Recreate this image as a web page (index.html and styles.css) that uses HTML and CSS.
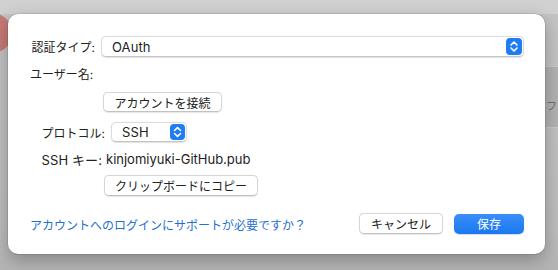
FILE: index.html
```html
<!DOCTYPE html>
<html>
<head>
  <title>アカウント設定</title>
  <link rel="stylesheet" href="styles.css">
</head>
<body>
  <!-- background window, mostly hidden by the sheet -->
  <div class="backdrop">
    <div class="red-dot"></div>
    <div class="side-band"><span>フォ</span></div>
  </div>

  <div class="sheet">
    <div class="row row-auth">
      <label class="label">認証タイプ:</label>
      <div class="popup popup-wide">
        <span class="popup-text">OAuth</span>
        <span class="stepper">
          <svg width="16" height="17" viewBox="0 0 16 17">
            <rect width="16" height="17" rx="4" fill="#1f7df2"/>
            <path d="M5 7 L8 4 L11 7" fill="none" stroke="#fff" stroke-width="1.6" stroke-linecap="round" stroke-linejoin="round"/>
            <path d="M5 10 L8 13 L11 10" fill="none" stroke="#fff" stroke-width="1.6" stroke-linecap="round" stroke-linejoin="round"/>
          </svg>
        </span>
      </div>
    </div>

    <div class="row row-user">
      <label class="label">ユーザー名:</label>
      <span class="value hidden-name">&nbsp;</span>
    </div>

    <div class="row row-connect">
      <span class="label"></span>
      <button class="btn btn-connect">アカウントを接続</button>
    </div>

    <div class="row row-proto">
      <label class="label">プロトコル:</label>
      <div class="popup popup-small">
        <span class="popup-text">SSH</span>
        <span class="stepper">
          <svg width="15" height="16" viewBox="0 0 15 16">
            <rect width="15" height="16" rx="4" fill="#1f7df2"/>
            <path d="M4.5 6.5 L7.5 3.6 L10.5 6.5" fill="none" stroke="#fff" stroke-width="1.6" stroke-linecap="round" stroke-linejoin="round"/>
            <path d="M4.5 9.5 L7.5 12.4 L10.5 9.5" fill="none" stroke="#fff" stroke-width="1.6" stroke-linecap="round" stroke-linejoin="round"/>
          </svg>
        </span>
      </div>
    </div>

    <div class="row row-key">
      <label class="label">SSH キー:</label>
      <span class="value">kinjomiyuki-GitHub.pub</span>
    </div>

    <div class="row row-copy">
      <span class="label"></span>
      <button class="btn btn-copy">クリップボードにコピー</button>
    </div>

    <div class="footer">
      <a class="help-link" href="#">アカウントへのログインにサポートが必要ですか？</a>
      <button class="btn btn-cancel">キャンセル</button>
      <button class="btn btn-save">保存</button>
    </div>
  </div>
</body>
</html>
```

FILE: styles.css
```css
body {
    margin: 0;
    width: 558px;
    height: 270px;
    overflow: hidden;
    font-family: Inter, "Noto Sans CJK JP", sans-serif;
    color: #222;
    background: linear-gradient(#d2d1d2 0px, #d2d1d2 14px, #c4c4c4 14px, #bdbdbd 230px, #b4b4b4 270px);
    position: relative;
}

.backdrop {
    position: absolute;
    inset: 0;
}

.red-dot {
    position: absolute;
    left: -22px;
    top: 14px;
    width: 34px;
    height: 38px;
    border-radius: 50%;
    background-color: #c77a76;
}

.side-band {
    position: absolute;
    left: 545px;
    top: 66px;
    width: 13px;
    height: 60px;
    overflow: hidden;
    background-color: #b2b2b2;
    border-top: 1px solid #c9c9c9;
    border-bottom: 1px solid #c9c9c9;
}

.side-band span {
    display: block;
    margin-top: 30px;
    margin-left: 1px;
    font-size: 11px;
    color: #6e6e6e;
    white-space: nowrap;
}

.sheet {
    position: relative;
    margin: 14px 0 0 8px;
    width: 537px;
    height: 240px;
    box-sizing: border-box;
    padding: 22px 21px 0 22px;
    background-color: #fff;
    border-radius: 10px;
    box-shadow: 0 0 0 0.5px rgba(0, 0, 0, 0.18), 0 6px 18px rgba(0, 0, 0, 0.28);
}

.row {
    display: flex;
    align-items: center;
}

.label {
    width: 65px;
    flex-shrink: 0;
    margin-right: 6px;
    text-align: right;
    font-size: 12px;
    white-space: nowrap;
}

.value {
    font-size: 13px;
}

.row-auth {
    height: 21px;
}

.row-user {
    height: 18px;
    margin-top: 7px;
}

.row-user .label {
    width: 63px;
    margin-right: 8px;
}

.row-connect {
    margin-top: 10px;
}

.row-connect .btn {
    margin-left: 2px;
}

.row-proto {
    margin-top: 10px;
    padding-left: 10px;
}

.row-key {
    height: 18px;
    margin-top: 8px;
    padding-left: 7px;
}

.row-key .label {
    margin-right: 4px;
    font-size: 13px;
}

.row-key .label,
.popup-text {
    letter-spacing: 0.1px;
}

.row-copy {
    margin-top: 7px;
}

.row-copy .btn {
    margin-left: 3px;
}

.popup {
    display: flex;
    align-items: center;
    box-sizing: border-box;
    height: 21px;
    padding: 0 1px 0 10px;
    background-color: #fff;
    border: 1px solid #dcdcdc;
    border-bottom-color: #c4c4c4;
    border-radius: 5px;
    box-shadow: 0 0.5px 1px rgba(0, 0, 0, 0.12);
}

.popup-wide {
    width: 423px;
}

.popup-small {
    width: 76px;
    height: 20px;
}

.popup-text {
    flex: 1;
    font-size: 13px;
}

.stepper {
    display: flex;
}

.btn {
    box-sizing: border-box;
    height: 20px;
    padding: 0;
    font-family: Inter, "Noto Sans CJK JP", sans-serif;
    font-size: 12px;
    color: #222;
    background-color: #fff;
    border: 1px solid #d6d6d6;
    border-bottom-color: #c2c2c2;
    border-radius: 5px;
    box-shadow: 0 0.5px 1px rgba(0, 0, 0, 0.1);
    cursor: pointer;
}

.btn-connect {
    width: 119px;
}

.btn-copy {
    width: 154px;
    height: 21px;
}

.footer {
    display: flex;
    align-items: center;
    margin-top: 17px;
}

.help-link {
    flex: 1;
    margin-top: 1px;
    font-size: 12px;
    color: #1f6fcf;
    text-decoration: none;
}

.btn-cancel {
    width: 84px;
    height: 21px;
}

.btn-save {
    width: 70px;
    height: 20px;
    margin-left: 11px;
    color: #fff;
    border: none;
    background: linear-gradient(#3a8ef8, #1b78f2);
    box-shadow: 0 0.5px 1px rgba(0, 0, 0, 0.15);
}
```
